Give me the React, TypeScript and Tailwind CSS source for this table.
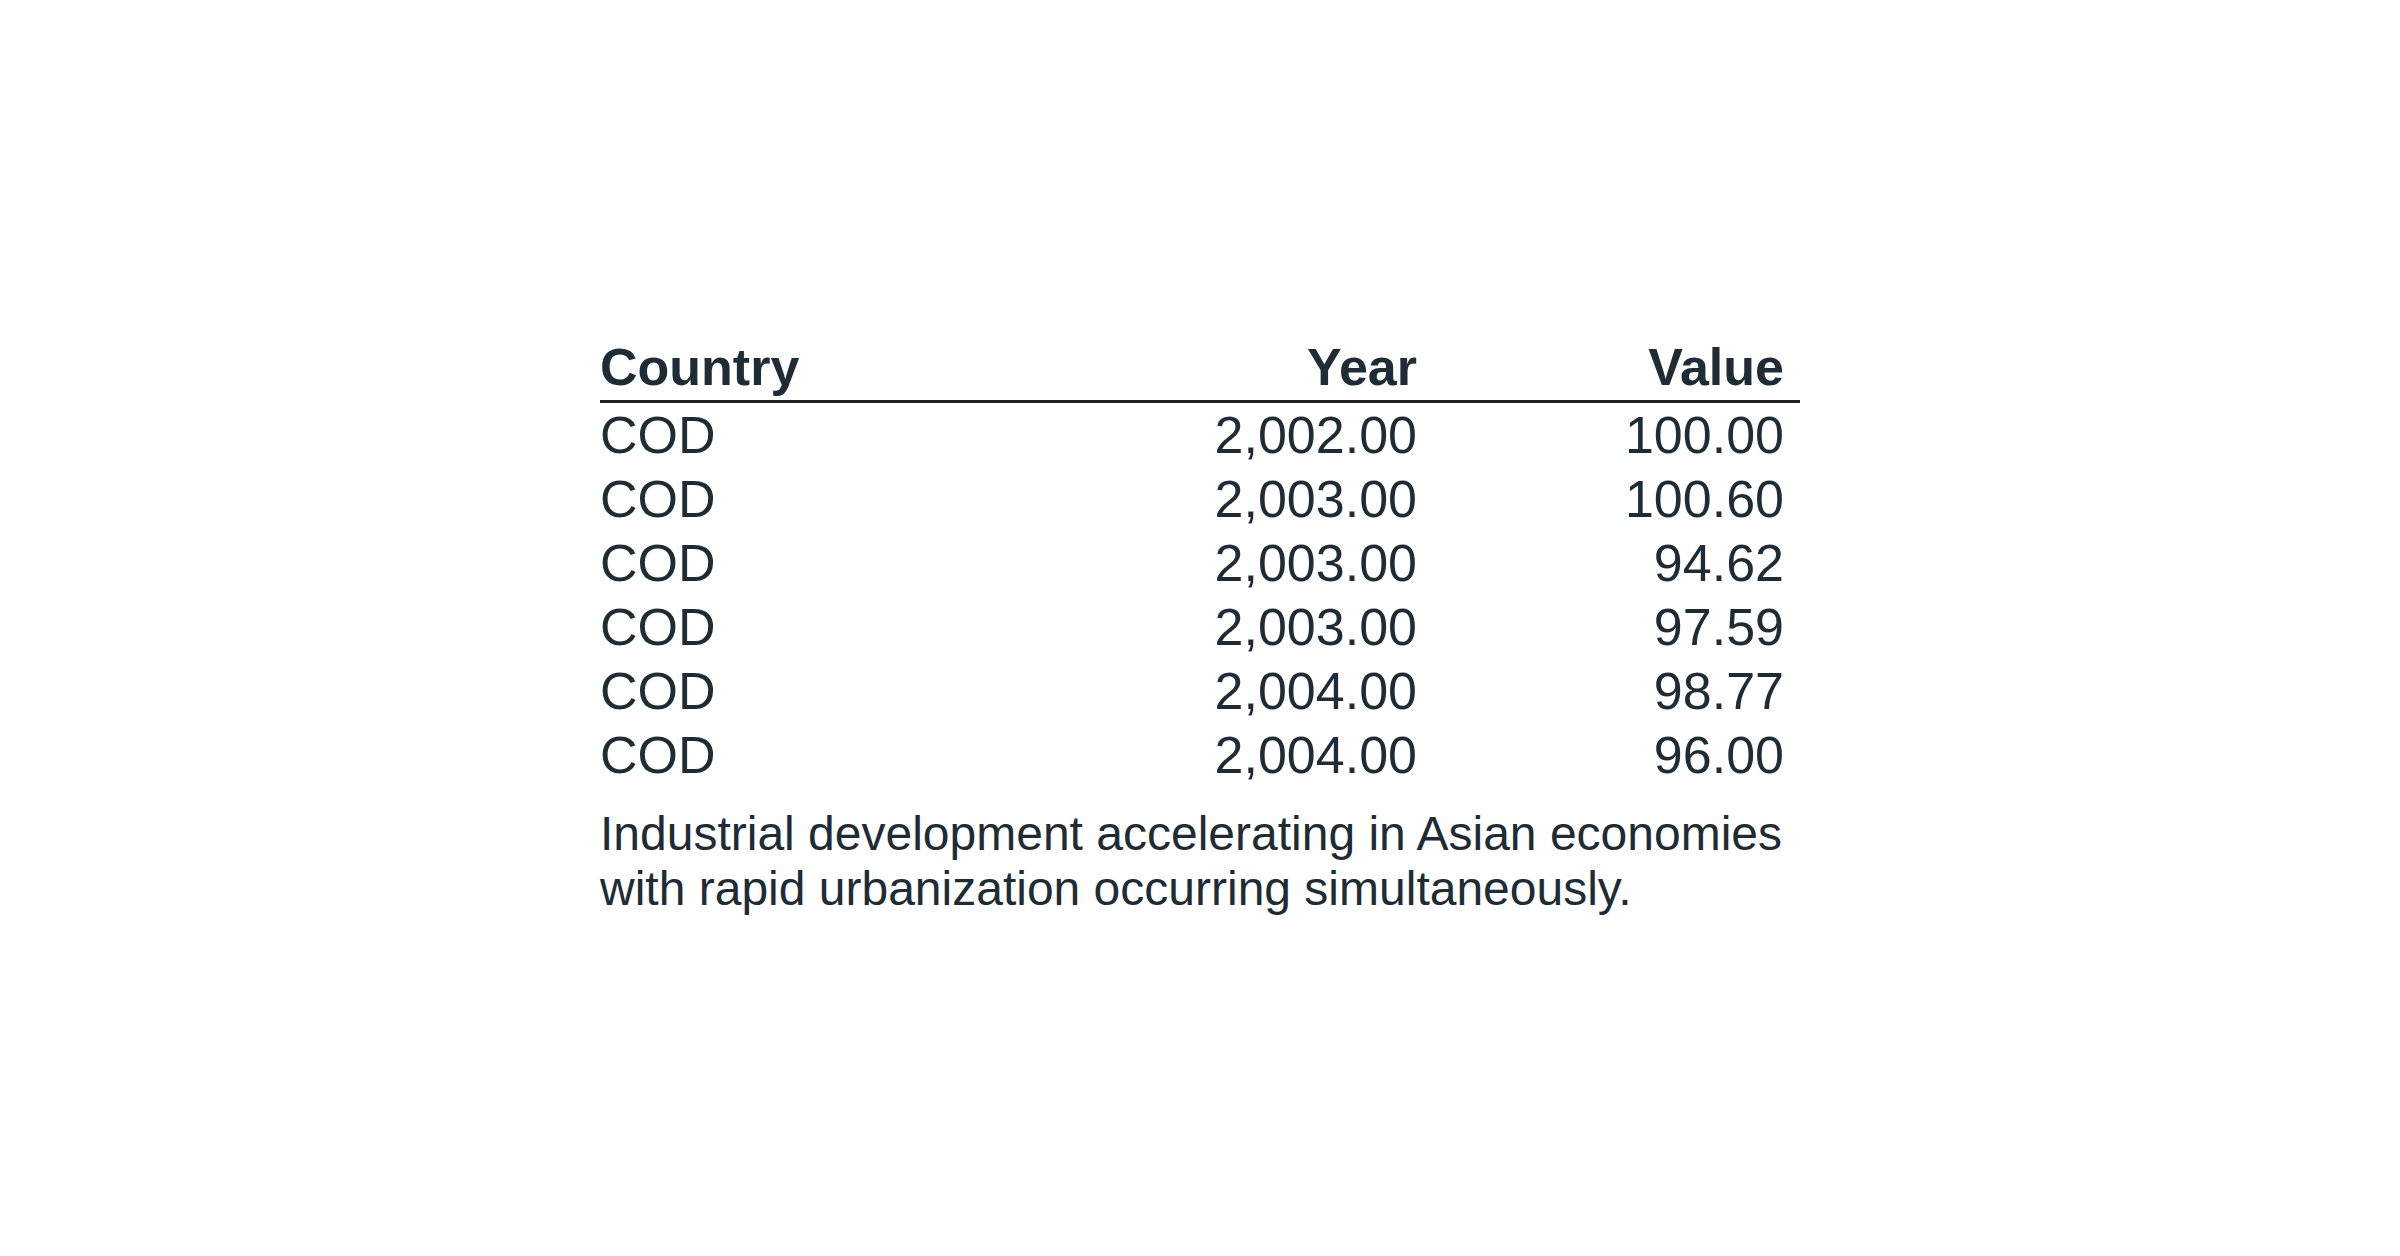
const rows: [string, string, string][] = [
  ["COD", "2,002.00", "100.00"],
  ["COD", "2,003.00", "100.60"],
  ["COD", "2,003.00", "94.62"],
  ["COD", "2,003.00", "97.59"],
  ["COD", "2,004.00", "98.77"],
  ["COD", "2,004.00", "96.00"],
];

export default function App() {
  return (
    <div className="flex min-h-screen items-center justify-center bg-white pb-[6px] font-['Liberation_Sans',Arial,sans-serif] text-[#1e2c35]">
      <div className="w-[1200px]">
        <table className="w-full border-collapse text-[52px] leading-[64px]">
          <thead>
            <tr className="border-b-[3px] border-[#222222]">
              <th className="w-[460px] p-0 pb-[1px] text-left font-bold">Country</th>
              <th className="p-0 pr-[14px] pb-[1px] text-right font-bold">Year</th>
              <th className="w-[369px] p-0 pr-[16px] pb-[1px] text-right font-bold">Value</th>
            </tr>
          </thead>
          <tbody>
            {rows.map(([country, year, value], i) => (
              <tr key={i}>
                <td className="p-0 text-left">{country}</td>
                <td className="p-0 pr-[14px] text-right">{year}</td>
                <td className="p-0 pr-[16px] text-right">{value}</td>
              </tr>
            ))}
          </tbody>
        </table>
        <p className="mt-[19px] text-[48px] leading-[55px]">
          Industrial development accelerating in Asian economies with rapid urbanization occurring simultaneously.
        </p>
      </div>
    </div>
  );
}
